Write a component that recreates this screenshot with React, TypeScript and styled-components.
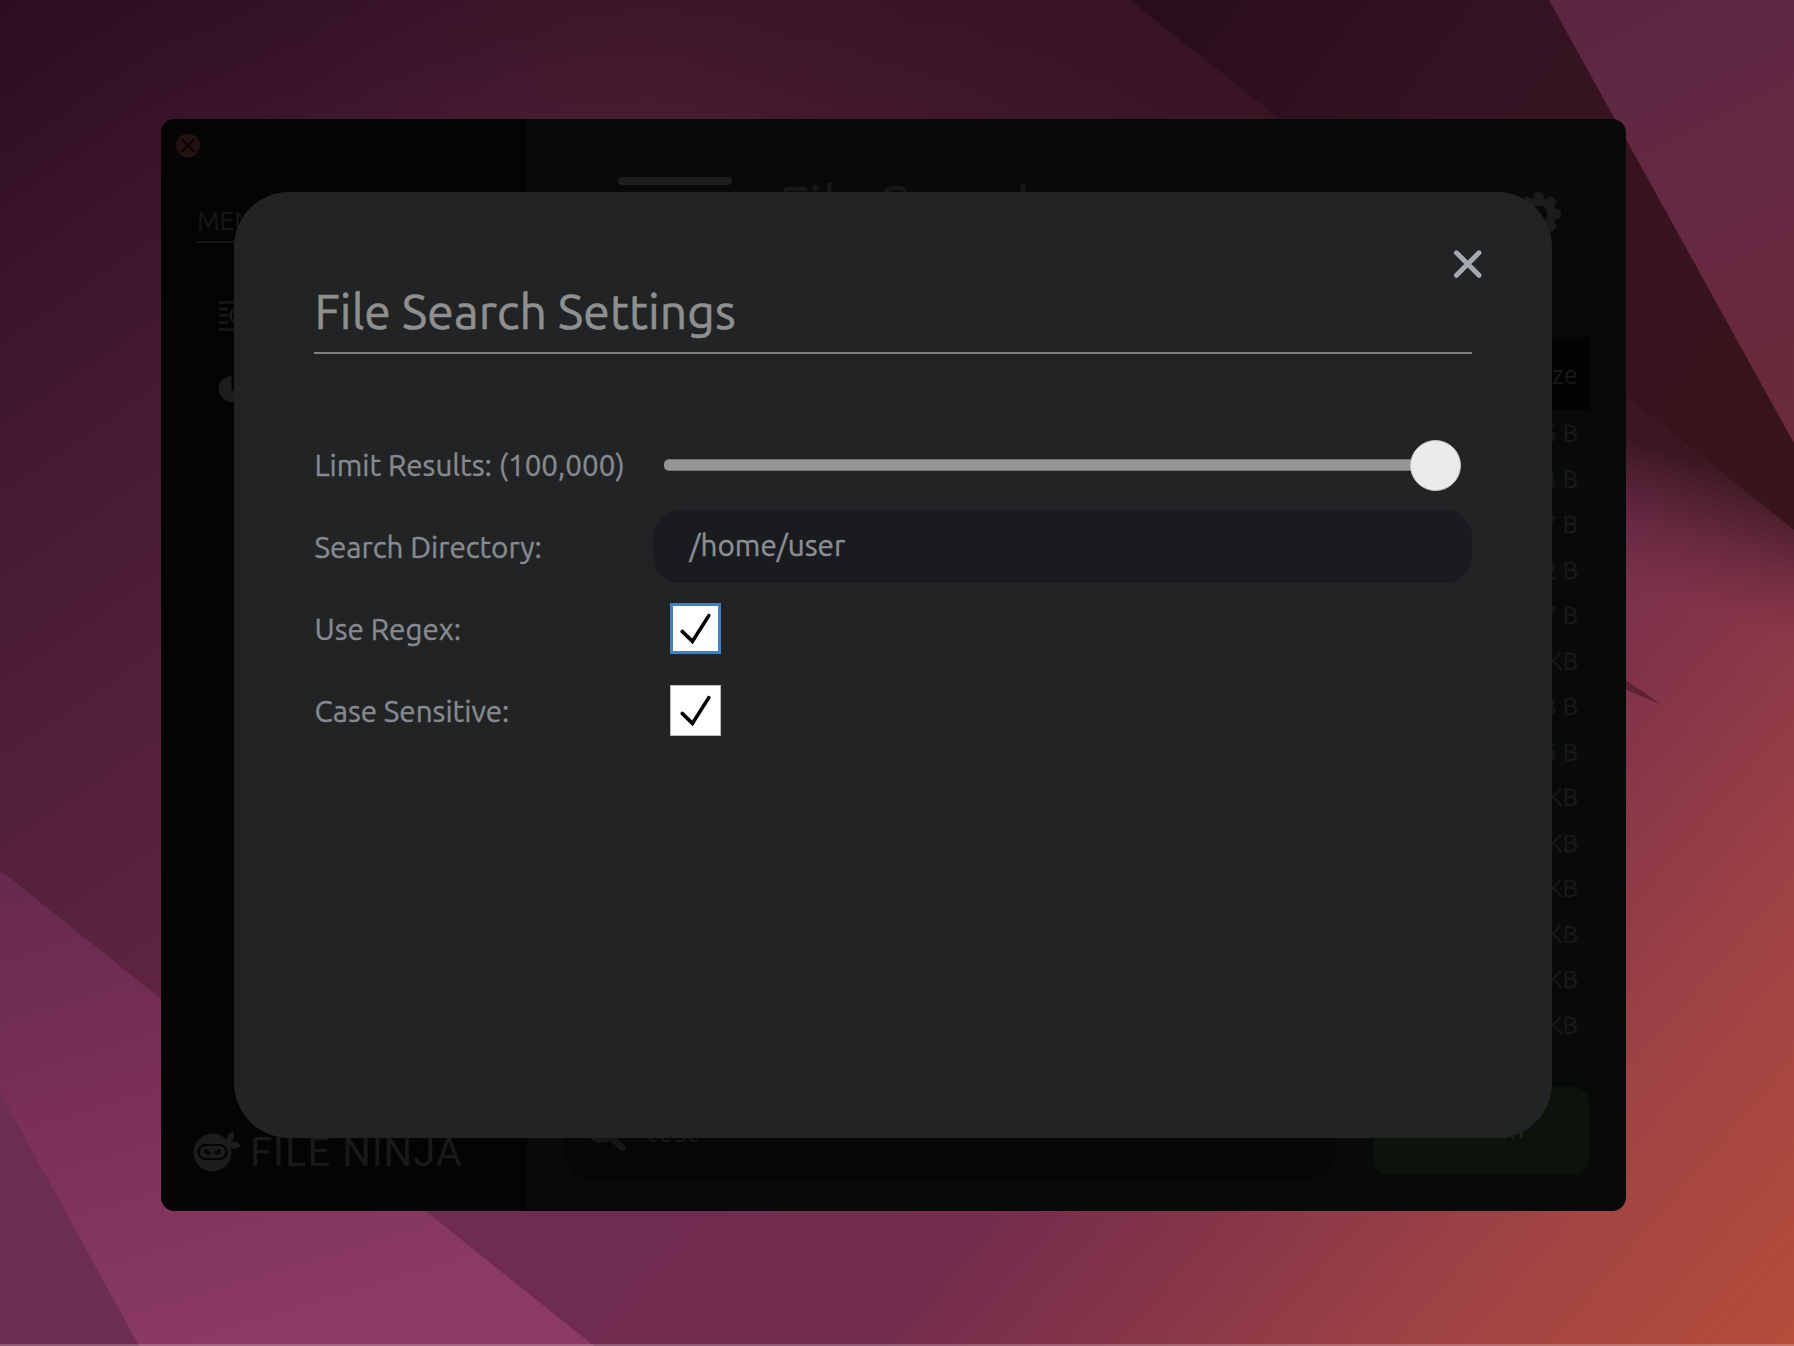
import React from "react";
import styled, { createGlobalStyle } from "styled-components";

const GlobalStyle = createGlobalStyle`
  *, *::before, *::after { box-sizing: border-box; }
  body { margin: 0; overflow: hidden; font-family: "Ubuntu", "Noto Sans", "Open Sans", sans-serif; }
`;

const Desktop = styled.div`
  position: relative;
  width: 1794px;
  height: 1346px;
  padding: 119px 168px 135px 161px;
  overflow: hidden;
  background: #45182f;
`;

const WallpaperSvg = styled.svg`
  position: absolute;
  inset: 0;
`;

const AppWindow = styled.div`
  position: relative;
  display: flex;
  width: 1464.5px;
  height: 1092px;
  border-radius: 14px;
  overflow: hidden;
  background: #080a09;
`;

const Sidebar = styled.aside`
  display: flex;
  flex-direction: column;
  width: 366px;
  background: #040404;
  padding: 14px 32px 36px 14px;
`;

const CloseDot = styled.div`
  display: flex;
  width: 25px;
  height: 25px;
`;

const MenuHeading = styled.div`
  margin: 45px 0 0 22px;
  height: 40px;
  border-bottom: 2px solid #131415;
  color: #151718;
  font-size: 26px;
  line-height: 35px;
  -webkit-text-stroke: 0.3px #151718;
`;

const MenuItems = styled.nav`
  display: flex;
  flex-direction: column;
  gap: 43px;
  margin: 57px 0 0 43px;
`;

const Brand = styled.div`
  display: flex;
  align-items: center;
  gap: 9px;
  margin-top: auto;
  margin-left: 18px;
  height: 44px;
  color: #17191b;
  font-family: Roboto, sans-serif;
  font-size: 40px;
  line-height: 44px;
  letter-spacing: 1px;
  white-space: nowrap;
  & > svg { margin-top: -4px; }
`;

const Main = styled.main`
  display: flex;
  flex-direction: column;
  flex: 1;
  padding: 56px 36px 33px 38px;
`;

const Header = styled.header`
  display: flex;
  height: 118px;
  padding-left: 53px;
`;

const HeaderBar = styled.div`
  width: 114px;
  height: 8px;
  margin-top: 2px;
  border-radius: 4px;
  background: #1b1d1e;
`;

const HeaderTitle = styled.h1`
  margin: -8px auto 0 47.5px;
  color: #171919;
  font-size: 55.4px;
  font-weight: 400;
  line-height: 74px;
  letter-spacing: 0.15px;
  -webkit-text-stroke: 0.6px #171919;
`;

const GearButton = styled.div`
  margin: 17px 28.5px 0 0;
  height: 46px;
`;

const Table = styled.div`
  display: flex;
  flex-direction: column;
  margin-top: 44px;
`;

const TableHead = styled.div`
  display: flex;
  align-items: center;
  justify-content: flex-end;
  height: 73px;
  padding: 1px 11.5px 0 0;
  background: #020303;
  color: #17181a;
  font-size: 26px;
`;

const TableRow = styled.div<{ $striped: boolean }>`
  display: flex;
  align-items: center;
  justify-content: flex-end;
  height: 45.5px;
  padding: 1px 11.5px 0 0;
  background: ${(p) => (p.$striped ? "#090b0a" : "#080a09")};
  color: #181a1a;
  font-size: 24.5px;
  -webkit-text-stroke: 0.3px #181a1a;
`;

const SearchBar = styled.div`
  display: flex;
  align-items: flex-end;
  gap: 38px;
  margin-top: auto;
`;

const QueryBox = styled.div`
  display: flex;
  align-items: center;
  width: 770px;
  height: 92px;
  padding: 0 0 2px 20px;
  border-radius: 24px;
  background: #050608;
  color: #16181a;
  font-size: 29.5px;
  gap: 18px;
  & > svg { margin: 3px 0 0 1px; }
`;

const SearchButton = styled.div`
  display: flex;
  align-items: center;
  justify-content: center;
  width: 216px;
  height: 88px;
  margin-bottom: 3px;
  border-radius: 15px;
  background: #0b130a;
  color: #232823;
  font-size: 28px;
  padding: 0 0 7px 3px;
`;

const Modal = styled.section`
  position: absolute;
  left: 73px;
  top: 73px;
  width: 1318px;
  height: 946px;
  border-radius: 55px;
  padding: 57px 80px 0 80px;
  background: #222324;
  color: #8b8f94;
`;

const ModalTop = styled.div`
  display: flex;
  justify-content: flex-end;
  height: 30px;
  margin-right: -12px;
`;

const ModalTitle = styled.h2`
  margin: 0;
  height: 75px;
  padding-left: 0.5px;
  border-bottom: 2px solid #7e7f80;
  color: #8f8f8f;
  font-size: 48px;
  font-weight: 400;
  line-height: 65px;
  letter-spacing: 0.12px;
  -webkit-text-stroke: 0.6px #8f8f8f;
`;

const Form = styled.div`
  display: flex;
  flex-direction: column;
  margin-top: 69px;
`;

const FormRow = styled.div`
  display: grid;
  grid-template-columns: 339px 1fr;
  align-items: center;
  height: 82px;
`;

const Label = styled.label`
  padding: 1px 0 0 0.5px;
  color: #868a90;
  font-size: 29.6px;
  line-height: 38px;
  white-space: nowrap;
  -webkit-text-stroke: 0.4px #868a90;
`;

const Slider = styled.div`
  display: flex;
  align-items: center;
  padding: 2px 11px 0;
`;

const Track = styled.div`
  flex: 1;
  height: 12px;
  border-radius: 5px 0 0 5px;
  background: #949494;
  border: 1px solid #6f7070;
  border-width: 1px 0;
`;

const Thumb = styled.div`
  width: 51px;
  height: 51px;
  margin-left: -4px;
  border-radius: 50%;
  border: 1px solid #c4c4c4;
  background: #ebebeb;
`;

const PathInput = styled.div`
  height: 73px;
  padding: 15px 36.5px;
  border-radius: 27px;
  background: #1a1b1f;
  font-size: 29.7px;
  line-height: 40px;
  -webkit-text-stroke: 0.4px #8b8f94;
`;

const CheckBox = styled.div<{ $focused?: boolean }>`
  display: flex;
  width: 51px;
  height: 51px;
  margin-left: 16.5px;
  background: #fff;
  border: ${(p) => (p.$focused ? "3px solid #4480bf" : "1px solid #b8b8b8")};
  & > svg { margin: ${(p) => (p.$focused ? "-3px" : "-1px")}; }
`;

const Wallpaper = () => (
  <WallpaperSvg width="1794" height="1346" viewBox="0 0 1794 1346">
    <defs>
      <linearGradient id="base" gradientUnits="userSpaceOnUse" x1="0" y1="0" x2="520" y2="760">
        <stop offset="0" stopColor="#2a0b20" />
        <stop offset="0.2" stopColor="#38132b" />
        <stop offset="0.5" stopColor="#481b35" />
        <stop offset="1" stopColor="#5f2543" />
      </linearGradient>
      <linearGradient id="top" gradientUnits="userSpaceOnUse" x1="300" y1="0" x2="1300" y2="0">
        <stop offset="0" stopColor="#451a2f" stopOpacity="0" />
        <stop offset="0.35" stopColor="#471b30" />
        <stop offset="1" stopColor="#381423" />
      </linearGradient>
      <linearGradient id="topFade" gradientUnits="userSpaceOnUse" x1="0" y1="0" x2="0" y2="120">
        <stop offset="0" stopColor="#30101f" stopOpacity="0.4" />
        <stop offset="1" stopColor="#30101f" stopOpacity="0" />
      </linearGradient>
      <linearGradient id="warm" gradientUnits="userSpaceOnUse" x1="988" y1="845" x2="1701" y2="1455">
        <stop offset="0" stopColor="#702c50" />
        <stop offset="0.25" stopColor="#732c4d" />
        <stop offset="0.43" stopColor="#843449" />
        <stop offset="0.7" stopColor="#a04345" />
        <stop offset="1" stopColor="#b54d39" />
      </linearGradient>
      <linearGradient id="shade" gradientUnits="userSpaceOnUse" x1="1710" y1="463" x2="1665" y2="600">
        <stop offset="0" stopColor="#3a1722" />
        <stop offset="0.35" stopColor="#4e1f31" stopOpacity="0.75" />
        <stop offset="1" stopColor="#6a2a40" stopOpacity="0" />
      </linearGradient>
      <linearGradient id="dark" gradientUnits="userSpaceOnUse" x1="1150" y1="0" x2="1794" y2="480">
        <stop offset="0" stopColor="#290d1a" />
        <stop offset="0.4" stopColor="#361322" />
        <stop offset="1" stopColor="#38141b" />
      </linearGradient>
      <linearGradient id="corner" gradientUnits="userSpaceOnUse" x1="1580" y1="0" x2="1794" y2="440">
        <stop offset="0" stopColor="#5b2642" />
        <stop offset="0.5" stopColor="#662943" />
        <stop offset="1" stopColor="#6b2a38" />
      </linearGradient>
      <linearGradient id="pink" gradientUnits="userSpaceOnUse" x1="60" y1="880" x2="200" y2="1346">
        <stop offset="0" stopColor="#682a4d" />
        <stop offset="0.5" stopColor="#7c3059" />
        <stop offset="1" stopColor="#8a3a64" />
      </linearGradient>
    </defs>
    <rect width="1794" height="1346" fill="url(#base)" />
    <rect width="1794" height="300" fill="url(#top)" />
    <rect width="1794" height="120" fill="url(#topFade)" />
    <path d="M300 1000 900 500 1625 397 1794 530V1346H300Z" fill="url(#warm)" />
    <path d="M1600 377 1794 530V720L1500 720V377Z" fill="url(#shade)" />
    <path d="M1130 0H1550L1794 443V530L1600 377V300H1506Z" fill="url(#dark)" />
    <path d="M1549 0H1794V443Z" fill="url(#corner)" />
    <path d="M1620 676 1662 705 1620 687Z" fill="#5d2236" />
    <path d="M0 870 594 1346H0Z" fill="url(#pink)" />
    <path d="M0 1092 139 1346H0Z" fill="#6b2e50" />
    <rect y="1344" width="1794" height="2" fill="#fff" fillOpacity="0.22" />
  </WallpaperSvg>
);

const gearPath = Array.from({ length: 8 }, (_, i) => {
  const base = (i * Math.PI) / 4 - Math.PI / 2;
  return [
    [-0.34, 16],
    [-0.17, 21.5],
    [0.17, 21.5],
    [0.34, 16],
  ]
    .map(([a, r]) => `${(22 + r * Math.cos(base + a)).toFixed(2)} ${(22 + r * Math.sin(base + a)).toFixed(2)}`)
    .join("L");
}).join("L");

const Gear = () => (
  <svg width="44" height="44" viewBox="0 0 44 44" fill="#1b1d1d">
    <path fillRule="evenodd" d={`M${gearPath}ZM22 13a9 9 0 1 0 0 18 9 9 0 1 0 0-18Z`} stroke="#1b1d1d" strokeWidth="1" strokeLinejoin="round" />
  </svg>
);

const Tick = () => (
  <svg width="51" height="51" viewBox="0 0 51 51" fill="none" stroke="#000" strokeWidth="3.6" strokeLinecap="round">
    <path d="M12.2 28.4 22.4 38.4 38.8 12.6" />
  </svg>
);

const Ninja = () => (
  <svg width="48" height="42" viewBox="0 0 48 42" fill="#1a1c1e">
    <circle cx="19.5" cy="22.5" r="19" />
    <path d="M33.5 11C33.5 6 36 2.5 40 2 42 6 40.5 10 38 12.5 42 10.5 46 13 47.5 16 44 19.5 39 19.5 35 16.5Z" />
    <rect x="5.5" y="15" width="28" height="14" rx="7" fill="#1a1c1e" stroke="#040404" strokeWidth="2.2" />
    <path d="M12 19 18 22A3.4 3.4 0 1 1 12 19ZM27 19 21 22A3.4 3.4 0 1 0 27 19Z" fill="#040404" />
  </svg>
);

const sizes = ["5 B", "3 B", "7 B", "2 B", "7 B", "KB", "3 B", "5 B", "KB", "KB", "KB", "KB", "KB", "KB"];

export default function App() {
  return (
    <>
      <GlobalStyle />
      <Desktop>
        <Wallpaper />
        <AppWindow>
          <Sidebar>
            <CloseDot>
              <svg width="25" height="25" viewBox="0 0 25 25">
                <circle cx="13" cy="12.5" r="12" fill="#231110" />
                <path d="M6.5 6 19.5 19M19.5 6 6.5 19" stroke="#0e0202" strokeWidth="2.4" />
              </svg>
            </CloseDot>
            <MenuHeading>MENU</MenuHeading>
            <MenuItems>
              <svg width="32" height="32" viewBox="0 0 32 32" fill="none" stroke="#17191b" strokeWidth="2.6">
                <path d="M1 2.5H31M1 9H10M1 15.5H10M1 22.5H10M1 29.5H31" />
                <circle cx="20" cy="15.5" r="7.5" />
              </svg>
              <svg width="28" height="28" viewBox="0 0 28 28" fill="#1b1d1f">
                <path d="M13.500 1A13 13 0 1 0 22.5 23.5L13.500 14.500Z" />
                <path d="M16 0V12H28A12 12 0 0 0 16 0Z" />
              </svg>
            </MenuItems>
            <Brand>
              <Ninja />
              FILE NINJA
            </Brand>
          </Sidebar>
          <Main>
            <Header>
              <HeaderBar />
              <HeaderTitle>File Search</HeaderTitle>
              <GearButton>
                <Gear />
              </GearButton>
            </Header>
            <Table>
              <TableHead>Size</TableHead>
              {sizes.map((size, i) => (
                <TableRow key={i} $striped={i % 2 === 1}>
                  {size}
                </TableRow>
              ))}
            </Table>
            <SearchBar>
              <QueryBox>
                <svg width="42" height="42" viewBox="0 0 42 42" fill="none" stroke="#151616" strokeLinecap="round">
                  <circle cx="15.5" cy="15.5" r="13" strokeWidth="5" />
                  <path d="M26 26 36.5 35.5" strokeWidth="7" />
                </svg>
                test
              </QueryBox>
              <SearchButton>Search</SearchButton>
            </SearchBar>
          </Main>
          <Modal>
            <ModalTop>
              <svg width="32" height="30" viewBox="0 0 32 30" fill="none" stroke="#a3a7b0" strokeWidth="5" strokeLinecap="round">
                <path d="M4.5 3.8 27 26.3M27 3.8 4.5 26.3" />
              </svg>
            </ModalTop>
            <ModalTitle>File Search Settings</ModalTitle>
            <Form>
              <FormRow>
                <Label>Limit Results: (100,000)</Label>
                <Slider>
                  <Track />
                  <Thumb />
                </Slider>
              </FormRow>
              <FormRow>
                <Label>Search Directory:</Label>
                <PathInput>/home/user</PathInput>
              </FormRow>
              <FormRow>
                <Label>Use Regex:</Label>
                <CheckBox $focused>
                  <Tick />
                </CheckBox>
              </FormRow>
              <FormRow>
                <Label>Case Sensitive:</Label>
                <CheckBox>
                  <Tick />
                </CheckBox>
              </FormRow>
            </Form>
          </Modal>
        </AppWindow>
      </Desktop>
    </>
  );
}
